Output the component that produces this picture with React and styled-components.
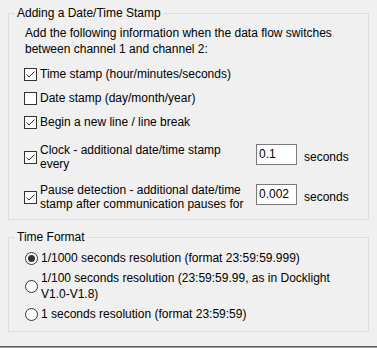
import React from "react";
import styled, { createGlobalStyle } from "styled-components";

const Global = createGlobalStyle`
  html, body, #root { height: 100%; }
  body {
    margin: 0;
    background: #f0f0f0;
    font-family: "Liberation Sans", Arial, sans-serif;
    font-size: 12px;
    color: #000;
  }
`;

const Page = styled.div`
  height: 100%;
  display: flex;
  flex-direction: column;
  padding-top: 5px;
  box-sizing: border-box;
`;

const Group = styled.fieldset`
  margin: ${({ $top }) => $top || 0}px 0 0 8px;
  width: 361px;
  box-sizing: border-box;
  border: 1px solid #dcdcdc;
  padding: 0 0 ${({ $bottom }) => $bottom}px 0;
  display: flex;
  flex-direction: column;
`;

const Legend = styled.legend`
  margin-left: 6px;
  padding: 0 2px;
  line-height: 16px;
`;

const Intro = styled.p`
  margin: 4px 0 0 16px;
  line-height: 16px;
`;

const Row = styled.div`
  display: flex;
  align-items: center;
  margin: ${({ $top }) => $top}px 0 0 15px;
  line-height: ${({ $lh }) => $lh || 16}px;
`;

const Box = styled.span`
  width: 13px;
  height: 13px;
  box-sizing: border-box;
  border: 1px solid #333;
  background: #fff;
  flex-shrink: 0;
  display: flex;
  margin-right: 3px;
`;

const Text = styled.span`
  width: ${({ $w }) => ($w ? `${$w}px` : "auto")};
  flex-shrink: 0;
`;

const Field = styled.div`
  align-self: flex-start;
  margin: 1px 0 0 6px;
  width: 41px;
  height: 21px;
  box-sizing: border-box;
  border: 1px solid #7a7a7a;
  background: #fff;
  padding: 0 2px;
  line-height: 19px;
`;

const Unit = styled.span`
  margin-left: 7px;
`;

const Radio = styled.span`
  width: 13px;
  height: 13px;
  box-sizing: border-box;
  border: 1px solid #333;
  border-radius: 50%;
  background: #fff;
  flex-shrink: 0;
  margin: 0 3px 0 1px;
  display: flex;
  align-items: center;
  justify-content: center;
  &::after {
    content: "";
    width: 7px;
    height: 7px;
    border-radius: 50%;
    background: ${({ $on }) => ($on ? "#333" : "transparent")};
  }
`;

const Spacer = styled.div`
  flex: 1;
`;

const Edge = styled.div`
  height: 2px;
  background: linear-gradient(#5f5f5f 50%, #9a9a9a 50%);
`;

function Check({ on }) {
  return (
    <Box>
      {on && (
        <svg width="11" height="11" viewBox="0 0 11 11">
          <polyline points="1.5,5.5 4,8 9.5,2.5" fill="none" stroke="#333" strokeWidth="1" />
        </svg>
      )}
    </Box>
  );
}

const stamps = [
  { text: "Time stamp (hour/minutes/seconds)", on: true, top: 9 },
  { text: "Date stamp (day/month/year)", on: false, top: 8 },
  { text: "Begin a new line / line break", on: true, top: 8 },
];

const intervals = [
  { text: "Clock - additional date/time stamp every", value: "0.1", top: 13 },
  {
    text: "Pause detection - additional date/time stamp after communication pauses for",
    value: "0.002",
    top: 12,
  },
];

const formats = [
  { text: "1/1000 seconds resolution (format 23:59:59.999)", on: true, top: 5 },
  { text: "1/100 seconds resolution (23:59:59.99, as in Docklight V1.0-V1.8)", on: false, top: 4 },
  { text: "1 seconds resolution (format 23:59:59)", on: false, top: 4 },
];

export default function App() {
  return (
    <Page>
      <Global />
      <Group $bottom={8}>
        <Legend>Adding a Date/Time Stamp</Legend>
        <Intro>
          Add the following information when the data flow switches
          <br />
          between channel 1 and channel 2:
        </Intro>
        {stamps.map((s) => (
          <Row key={s.text} $top={s.top}>
            <Check on={s.on} />
            <Text>{s.text}</Text>
          </Row>
        ))}
        {intervals.map((s) => (
          <Row key={s.text} $top={s.top} $lh={14}>
            <Check on />
            <Text $w={210}>{s.text}</Text>
            <Field>{s.value}</Field>
            <Unit>seconds</Unit>
          </Row>
        ))}
      </Group>
      <Group $top={9} $bottom={9}>
        <Legend>Time Format</Legend>
        {formats.map((f) => (
          <Row key={f.text} $top={f.top}>
            <Radio $on={f.on} />
            <Text $w={300}>{f.text}</Text>
          </Row>
        ))}
      </Group>
      <Spacer />
      <Edge />
    </Page>
  );
}
